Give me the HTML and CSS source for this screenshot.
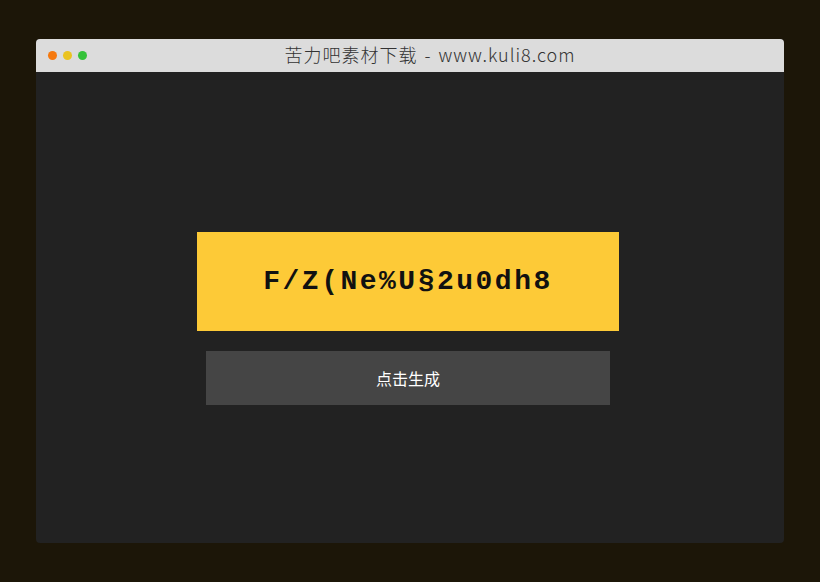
FILE: index.html
```html
<!DOCTYPE html>
<html lang="zh">
<head>
    <meta charset="UTF-8">
    <title>苦力吧素材下载</title>
    <link rel="stylesheet" href="styles.css">
</head>
<body>
    <div class="window">
        <!-- Title bar -->
        <div class="title-bar">
            <div class="dots">
                <span class="dot orange"></span>
                <span class="dot yellow"></span>
                <span class="dot green"></span>
            </div>
            <div class="title">苦力吧素材下载 - www.kuli8.com</div>
        </div>

        <!-- Content -->
        <div class="content">
            <div class="password-box">F/Z(Ne%U§2u0dh8</div>
            <button class="generate-btn">点击生成</button>
        </div>
    </div>
</body>
</html>
```

FILE: styles.css
```css
* {
    margin: 0;
    padding: 0;
    box-sizing: border-box;
}

body {
    font-family: "Noto Sans CJK SC", "Noto Sans", sans-serif;
    background: #1c1608;
    height: 582px;
    padding: 39px 36px;
}

.window {
    width: 748px;
    height: 504px;
    background: #222222;
    border-radius: 4px;
    overflow: hidden;
    display: flex;
    flex-direction: column;
}

/* Title bar */
.title-bar {
    height: 33px;
    background: #dcdcdc;
    display: flex;
    align-items: center;
    padding: 0 12px;
}

.dots {
    display: flex;
    gap: 6px;
    width: 60px;
}

.dot {
    width: 9px;
    height: 9px;
    border-radius: 50%;
}

.dot.orange { background: #f5790f; }
.dot.yellow { background: #eac320; }
.dot.green { background: #35c23a; }

.title {
    flex: 1;
    text-align: center;
    font-size: 18px;
    font-weight: 300;
    letter-spacing: 1px;
    word-spacing: 2px;
    color: #333;
    padding-right: 20px;
    margin-top: -3px;
}

/* Content */
.content {
    flex: 1;
    display: flex;
    flex-direction: column;
    align-items: center;
    padding-top: 160px;
    padding-right: 4px;
}

.password-box {
    width: 422px;
    height: 99px;
    background: #fdca37;
    display: flex;
    align-items: center;
    justify-content: center;
    font-family: "Liberation Mono", "Courier New", monospace;
    font-weight: bold;
    font-size: 28px;
    letter-spacing: 2.5px;
    color: #111;
}

.generate-btn {
    margin-top: 20px;
    width: 404px;
    height: 54px;
    border: none;
    background: #454545;
    color: #fff;
    font-family: "Noto Sans CJK SC", sans-serif;
    font-size: 16px;
    cursor: pointer;
}
```
